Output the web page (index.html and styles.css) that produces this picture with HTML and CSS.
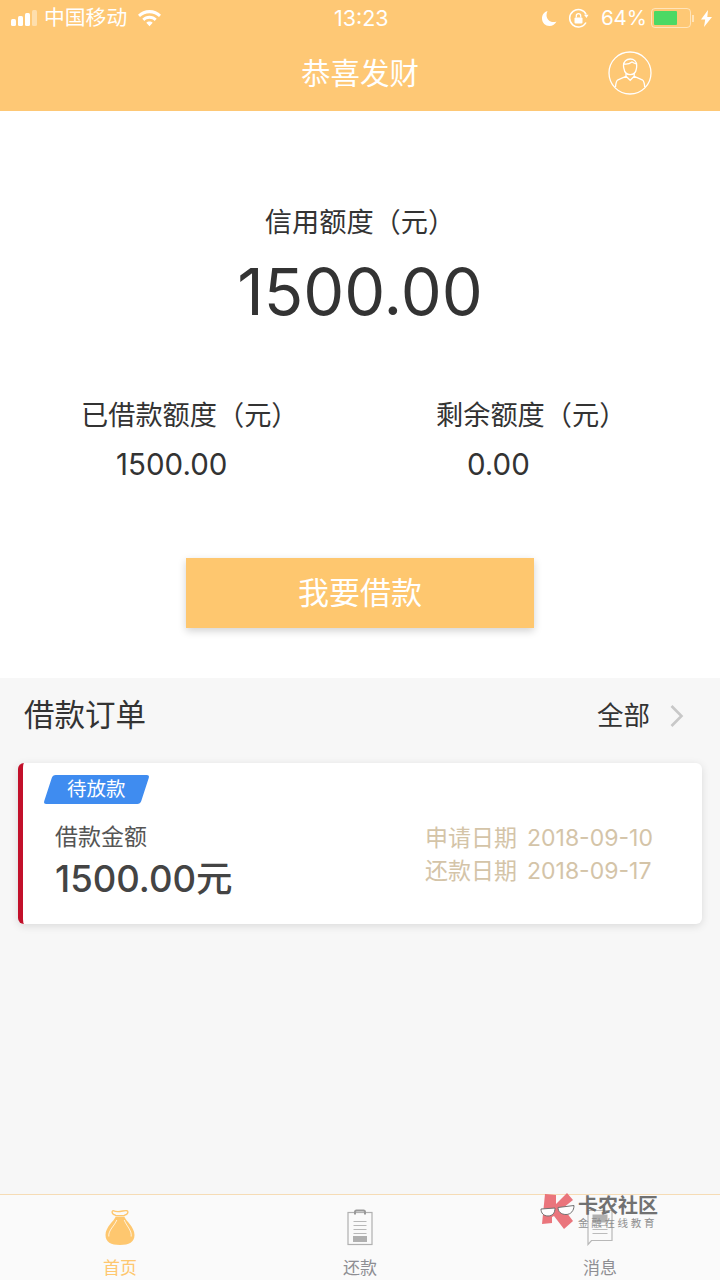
FILE: index.html
```html
<!DOCTYPE html>
<html lang="zh">
<head>
<meta charset="utf-8">
<title>恭喜发财</title>
<link rel="stylesheet" href="styles.css">
</head>
<body>
<div class="app">
  <header class="top">
    <div class="status">
      <div class="status-left">
        <div class="signal"><i class="b1"></i><i class="b2"></i><i class="b3"></i><i class="b4"></i></div>
        <span class="carrier">中国移动</span>
        <svg class="wifi" width="25" height="18" viewBox="0 0 25 18"><path d="M12.500 1C8 1 4 2.800 1 5.700L3 8C5.500 5.600 8.800 4.200 12.500 4.200s7 1.400 9.500 3.800l2-2.300C21 2.800 17 1 12.500 1z" fill="#fff"/><path d="M12.500 6.800c-2.800 0-5.300 1.100-7.200 2.900l2 2.200c1.300-1.300 3.200-2.100 5.200-2.100s3.900.8 5.200 2.100l2-2.200c-1.900-1.800-4.400-2.900-7.200-2.900z" fill="#fff"/><path d="M12.500 12.500c-1.300 0-2.400.5-3.200 1.300l3.200 3.500 3.200-3.500c-.8-.8-1.900-1.300-3.200-1.300z" fill="#fff"/></svg>
      </div>
      <div class="clock">13:23</div>
      <div class="status-right">
        <svg width="17" height="17" viewBox="0 0 17 17"><path d="M6.500 1C3 2 1 5 1 8.500 1 13 4.500 16 8.500 16c3 0 5.800-1.800 7-4.500-1 .5-2 .6-3 .6C8.500 12.100 5.500 9 5.500 5.300c0-1.500.4-3 1-4.300z" fill="#fff"/></svg>
        <svg class="lock" width="21" height="21" viewBox="0 0 21 21"><path d="M18 14.500A8.700 8.700 0 1 1 18.200 6.500" fill="none" stroke="#fff" stroke-width="1.500"/><path d="M16 6.800h4.500L18.500 10z" fill="#fff"/><rect x="6.500" y="9.500" width="8" height="6" rx="1" fill="#fff"/><path d="M8.300 9.500V7.800a2.200 2.200 0 0 1 4.400 0v1.700" fill="none" stroke="#fff" stroke-width="1.300"/></svg>
        <span class="pct">64%</span>
        <div class="battery"><div class="battery-fill"></div></div>
        <div class="battery-nub"></div>
        <svg class="bolt" width="11" height="17" viewBox="0 0 11 17"><path d="M7 0L0 9.500h4.200L3 17l8-10H6.300z" fill="#fff"/></svg>
      </div>
    </div>
    <div class="nav">
      <h1 class="nav-title">恭喜发财</h1>
      <svg class="avatar" width="44" height="44" viewBox="0 0 44 44" fill="none" stroke="#fff" stroke-width="1.300"><circle cx="22" cy="22" r="21"/><path d="M15.500 14.500c0-4 3-6.500 6.700-6.500s6.500 2.500 6.500 6.500c0 1 0 2-.3 3.200-.4 3-2.500 6-6.200 6s-5.800-3-6.200-6c-.4-1.200-.5-2.200-.5-3.200z"/><path d="M16 13c3 .5 6-.5 8-2 1.500 1 3 1.500 4.500 2"/><path d="M18 22.500v2.800l-8 3.500c-1.600 1-2.300 4-2.500 7.200M26.200 22.500v2.800l8 3.500c1.600 1 2.300 4 2.500 7.200M18 25.300l4.200 4 4-4"/></svg>
    </div>
  </header>

  <section class="quota">
    <div class="quota-label">信用额度（元）</div>
    <div class="quota-value">1500.00</div>
    <div class="quota-row">
      <div class="quota-col quota-col-left">
        <div class="sub-label">已借款额度（元）</div>
        <div class="sub-value sub-value-left">1500.00</div>
      </div>
      <div class="quota-col quota-col-right">
        <div class="sub-label">剩余额度（元）</div>
        <div class="sub-value sub-value-right">0.00</div>
      </div>
    </div>
    <div class="cta-wrap"><button class="cta">我要借款</button></div>
  </section>

  <main class="orders">
    <div class="orders-head">
      <h2 class="orders-title">借款订单</h2>
      <div class="orders-all">
        <span>全部</span>
        <svg width="16" height="24" viewBox="0 0 16 24"><path d="M2.500 2l10 10-10 10" fill="none" stroke="#c8c8c8" stroke-width="2.600"/></svg>
      </div>
    </div>
    <article class="card">
      <div class="badge"><span class="badge-text">待放款</span></div>
      <div class="card-body">
        <div>
          <div class="amount-label">借款金额</div>
          <div class="amount">1500.00元</div>
        </div>
        <div class="dates">
          <div class="date-row"><span>申请日期</span><span class="date-val">2018-09-10</span></div>
          <div class="date-row"><span>还款日期</span><span class="date-val">2018-09-17</span></div>
        </div>
      </div>
    </article>
  </main>

  <nav class="tabs">
    <div class="tab tab-active">
      <svg width="30" height="36" viewBox="0 0 30 36"><path d="M8 1.200c2 .8 4 1.200 7 .8s5-1.300 7-.8c1.500.5 1 2.800-.5 3.600-1 .6-2 1-2.500 1.400H11c-.5-.4-1.500-.8-2.500-1.400C7 4 6.500 1.700 8 1.200z" fill="none" stroke="#fec76f" stroke-width="1.400"/><path d="M10.500 7.500h9c1.500 4 10 10 10 18 0 7-5.500 10-14.500 10S.500 32.500.500 25.500c0-8 8.500-14 10-18z" fill="#fec76f"/><path d="M3.800 27c-.8-6 6-11 8-16.500M26.200 27c.8-6-5-11-7-16.500" fill="none" stroke="#fff" stroke-width="1" opacity=".75"/></svg>
      <span class="tab-label">首页</span>
    </div>
    <div class="tab">
      <svg width="26" height="36" viewBox="0 0 26 36"><rect x="1" y="3" width="24" height="32" fill="none" stroke="#b0b0b0" stroke-width="1.200"/><path d="M8 5V2.500c0-.8.500-1.500 1.500-1.500h7c1 0 1.500.7 1.500 1.500V5" fill="none" stroke="#999" stroke-width="2"/><path d="M6.500 12h13M6.500 16h13M6.500 20h13M6.500 24h13" stroke="#b8b8b8" stroke-width="1"/><rect x="6" y="26.500" width="14" height="6" fill="#b0b0b0"/></svg>
      <span class="tab-label">还款</span>
    </div>
    <div class="tab">
      <svg width="26" height="36" viewBox="0 0 26 36"><path d="M1 1h24v30H4.500L1 35z" fill="none" stroke="#b8b8b8" stroke-width="1.200"/><rect x="5.500" y="5" width="15" height="8" fill="#b0b0b0"/><path d="M5.500 16h15M5.500 20h15M5.500 24h15" stroke="#bbb" stroke-width="1"/></svg>
      <span class="tab-label">消息</span>
    </div>
    <div class="mark">
      <svg class="mark-logo" width="36" height="38" viewBox="0 0 36 38"><path d="M5 2l11 1v9L27 1l6 7-10 8 10 13-9 8-10-13-2 1v6l-10 1z" fill="#e96a72"/><path d="M1 17l14-1c0 5-2.500 8-7 8s-7-3-7-7z" fill="#fff" stroke="#666" stroke-width="1"/><path d="M18 15.500l16-2c0 5-3 9-8 9s-8-3-8-7z" fill="#fff" stroke="#666" stroke-width="1"/></svg>
      <div class="mark-text">
        <div class="mark-name">卡农社区</div>
        <div class="mark-sub">金融在线教育</div>
      </div>
    </div>
  </nav>
</div>
</body>
</html>
```
FILE: styles.css
```css
* { box-sizing: border-box; }
html, body { margin: 0; padding: 0; }
body {
  font-family: Inter, "Noto Sans CJK SC", sans-serif;
  color: #333;
  background: #f7f7f7;
}
h1, h2 { margin: 0; font-weight: 400; }
.app { width: 720px; height: 1280px; display: flex; flex-direction: column; overflow: hidden; }

.top { background: #fec875; color: #fff; height: 111px; flex: none; }
.status { height: 36px; display: flex; align-items: center; justify-content: space-between; padding: 0 8px 0 11px; position: relative; }
.status-left, .status-right { display: flex; align-items: center; }
.signal { display: flex; align-items: flex-end; gap: 2px; height: 16px; margin-right: 7px; }
.signal i { display: block; width: 5px; background: #fff; border-radius: 1.500px; }
.b1 { height: 7px; } .b2 { height: 10px; } .b3 { height: 13px; }
.signal .b4 { height: 16px; background: rgba(255,255,255,.4); }
.carrier { font-size: 20.800px; margin-right: 10px; line-height: 1; }
.clock { position: absolute; left: 334px; top: 6px; font-size: 21.500px; line-height: 25px; }
.lock { margin-left: 10px; }
.pct { font-size: 20.500px; margin-left: 12px; line-height: 1; }
.battery { width: 40px; height: 20px; border: 1.500px solid rgba(255,255,255,.5); border-radius: 4px; padding: 2px; margin-left: 4px; }
.battery-fill { width: 23px; height: 100%; background: #4cd964; border-radius: 1px; }
.battery-nub { width: 2px; height: 7px; background: rgba(255,255,255,.5); margin-left: 1px; }
.bolt { margin-left: 7px; }

.nav { height: 75px; display: flex; align-items: center; justify-content: center; position: relative; }
.nav-title { font-size: 29.500px; font-weight: 400; line-height: 1; }
.avatar { position: absolute; right: 68px; top: 15px; }

.quota { background: #fff; height: 567px; flex: none; padding-top: 94px; }
.quota-label { font-size: 27.200px; line-height: 36px; text-align: center; }
.quota-value { font-size: 65px; line-height: 76px; text-align: center; margin-top: 13px; color: #333; }
.quota-row { display: flex; margin-top: 68px; }
.quota-col-left { width: 354px; padding-left: 81px; }
.quota-col-right { padding-left: 82px; }
.sub-label { font-size: 27.200px; line-height: 36px; }
.sub-value { font-size: 29.500px; line-height: 40px; margin-top: 10px; }
.sub-value-left { margin-left: 35px; }
.sub-value-right { margin-left: 31px; }
.cta-wrap { display: flex; justify-content: center; margin-top: 74px; }
.cta { width: 348px; height: 70px; border: 0; padding: 0 0 5px; background: #fec76f; color: #fff; font: inherit; font-size: 31px; box-shadow: 0 3px 8px rgba(0,0,0,.18); }

.orders { flex: 1; padding: 0 18px; background: #f7f7f7; }
.orders-head { height: 85px; display: flex; align-items: center; justify-content: space-between; padding: 0 17px 10px 6px; }
.orders-title { font-size: 30.500px; line-height: 1; }
.orders-all { display: flex; align-items: center; gap: 19px; font-size: 26.500px; line-height: 1; }
.card { position: relative; height: 161px; background: #fff; border-left: 5px solid #c2102a; border-radius: 6px; box-shadow: 0 2px 8px rgba(0,0,0,.12); padding: 12px 0 0 22px; }
.badge { position: relative; width: 97px; height: 29px; margin-left: 3px; background: #3f8cf0; border-radius: 3px; transform: skewX(-18deg); display: flex; align-items: center; justify-content: center; }
.badge-text { font-size: 19.500px; line-height: 1; color: #fff; transform: skewX(18deg); }
.card-body { display: flex; justify-content: space-between; padding: 18px 48px 0 10px; }
.amount-label { font-size: 23px; line-height: 30px; color: #555; }
.amount { font-size: 36.500px; line-height: 46px; font-weight: 500; color: #444; margin-top: 4px; }
.dates { color: #d4c4a8; font-size: 23px; }
.date-row { display: flex; gap: 10px; line-height: 33px; }
.date-val { min-width: 127px; }

.tabs { position: relative; height: 86px; flex: none; display: grid; grid-template-columns: repeat(3, 240px); background: #fafafa; border-top: 1px solid #f6dcb5; }
.tab { display: flex; flex-direction: column; align-items: center; padding-top: 14px; color: #8e8e93; }
.tab svg { height: 37px; }
.tab-label { font-size: 17px; line-height: 20px; margin-top: 12px; }
.tab-active { color: #fec76f; }
.mark { position: absolute; left: 540px; top: -3px; display: flex; align-items: center; opacity: .92; }
.mark-text { margin-left: 2px; padding-top: 4px; }
.mark-name { font-size: 20px; font-weight: 700; line-height: 21px; color: #666; }
.mark-sub { font-size: 10.500px; line-height: 13px; letter-spacing: 2.700px; color: #888; white-space: nowrap; }
```
